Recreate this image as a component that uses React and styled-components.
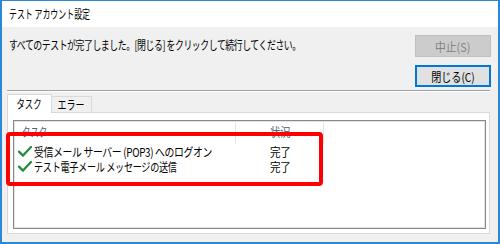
import styled, { createGlobalStyle } from "styled-components";

const FONT = `"Noto Sans CJK JP", "Noto Sans", sans-serif`;

const GlobalStyle = createGlobalStyle`
  html, body {
    margin: 0;
    padding: 0;
    background: #ffffff;
  }
  * {
    box-sizing: border-box;
  }
`;

const tasks = [
  { name: "受信メール サーバー (POP3) へのログオン", status: "完了", sx: 0.82 },
  { name: "テスト電子メール メッセージの送信", status: "完了", sx: 0.76 },
];

function Check() {
  return (
    <CheckIcon viewBox="0 0 14 11" aria-hidden="true">
      <path d="M1 5.6 L5 9.6 L13 1" />
    </CheckIcon>
  );
}

export default function App() {
  return (
    <>
      <GlobalStyle />
      <Window>
        <TitleBar>
          <Narrow $sx={0.66}>テスト アカウント設定</Narrow>
        </TitleBar>
        <Body>
          <TopRow>
            <Message>
              <Narrow $sx={0.74}>
                すべてのテストが完了しました。[閉じる] をクリックして続行してください。
              </Narrow>
            </Message>
            <Button disabled>
              <Narrow $sx={0.9} $center>中止(S)</Narrow>
            </Button>
          </TopRow>
          <ButtonRow>
            <Button $default>
              <Narrow $sx={0.84} $center>閉じる(C)</Narrow>
            </Button>
          </ButtonRow>
          <Separator />
          <TabStrip>
            <Tab $active>
              <Narrow $sx={0.7} $center>タスク</Narrow>
            </Tab>
            <Tab>
              <Narrow $sx={0.75} $center>エラー</Narrow>
            </Tab>
          </TabStrip>
          <TabPanel>
            <ListView>
              <HeaderRow>
                <HeaderCell $w={221} $pad={7}>
                  <Narrow $sx={0.7}>タスク</Narrow>
                </HeaderCell>
                <HeaderCell $w={88} $pad={34}>
                  <Narrow $sx={0.85}>状況</Narrow>
                </HeaderCell>
                <HeaderCell $last />
              </HeaderRow>
              {tasks.map((t) => (
                <Row key={t.name}>
                  <NameCell>
                    <Check />
                    <Narrow $sx={t.sx}>{t.name}</Narrow>
                  </NameCell>
                  <StatusCell>
                    <Narrow $sx={0.88}>{t.status}</Narrow>
                  </StatusCell>
                </Row>
              ))}
            </ListView>
            <Highlight />
          </TabPanel>
        </Body>
      </Window>
    </>
  );
}

const Window = styled.div`
  width: 500px;
  height: 244px;
  display: flex;
  flex-direction: column;
  background: #f0f0f0;
  border: 2px solid #2b88d8;
  border-top-width: 1px;
  font-family: ${FONT};
  font-size: 12px;
  color: #000;
  overflow: hidden;
`;

const Narrow = styled.span`
  display: inline-block;
  white-space: nowrap;
  transform: scaleX(${(p) => p.$sx});
  transform-origin: ${(p) => (p.$center ? "center" : "left")} center;
`;

const TitleBar = styled.div`
  height: 26px;
  flex: none;
  background: #ffffff;
  display: flex;
  align-items: center;
  padding-left: 7px;
  padding-bottom: 1px;
  font-size: 12px;
`;

const Body = styled.div`
  flex: 1;
  display: flex;
  flex-direction: column;
  padding: 8px 7px 0 5px;
`;

const TopRow = styled.div`
  display: flex;
  align-items: center;
  justify-content: space-between;
  height: 22px;
`;

const Message = styled.div`
  padding-left: 2px;
  padding-bottom: 3px;
  font-size: 12px;
  letter-spacing: -0.6px;
  white-space: nowrap;
  width: 0;
  flex: 1;
`;

const ButtonRow = styled.div`
  display: flex;
  justify-content: flex-end;
  margin-top: 8px;
`;

const Button = styled.button`
  width: 76px;
  height: 22px;
  padding: 0;
  display: flex;
  align-items: center;
  justify-content: center;
  font-family: ${FONT};
  font-size: 12px;
  color: #000;
  background: #e1e1e1;
  border: 1px solid #adadad;
  ${(p) => p.$default && `border: 2px solid #0078d7;`}

  &:disabled {
    background: #cccccc;
    border-color: #bfbfbf;
    color: #838383;
  }
`;

const Separator = styled.div`
  margin: 3px 1px 0 0;
  border-top: 1px solid #a0a0a0;
  border-bottom: 1px solid #ffffff;
`;

const Tab = styled.div`
  display: flex;
  align-items: center;
  justify-content: center;
  font-size: 12px;
  border: 1px solid #d9d9d9;
  border-bottom: none;
  background: ${(p) => (p.$active ? "#ffffff" : "#f0f0f0")};
  width: ${(p) => (p.$active ? "45px" : "40px")};
  height: ${(p) => (p.$active ? "19px" : "16px")};
  padding-bottom: ${(p) => (p.$active ? "2px" : "0")};
  ${(p) => !p.$active && `border-left: none;`}
`;

const TabStrip = styled.div`
  display: flex;
  align-items: flex-end;
  margin-top: 2px;
  margin-bottom: -1px;
  height: 19px;
  position: relative;
  z-index: 1;

  ${Tab}:not(:first-child) {
    margin-bottom: 1px;
  }
`;

const TabPanel = styled.div`
  margin-right: 1px;
  height: 122px;
  background: #ffffff;
  border: 1px solid #d9d9d9;
  padding: 7px 3px 4px 5px;
  position: relative;
`;

const ListView = styled.div`
  height: 100%;
  border: 1px solid #828790;
  box-shadow: inset 1px 1px 0 #e3e3e3, inset -1px -1px 0 #e3e3e3;
  background: #ffffff;
  padding: 1px;
`;

const HeaderRow = styled.div`
  display: flex;
  height: 22px;
  color: #4c607a;
  font-size: 12px;
`;

const HeaderCell = styled.div`
  ${(p) => (p.$last ? "flex: 1;" : `width: ${p.$w}px;`)}
  padding-left: ${(p) => p.$pad || 0}px;
  padding-top: 1px;
  border-right: ${(p) => (p.$last ? "none" : "1px solid #e5e5e5")};
  display: flex;
  align-items: flex-start;
`;

const Row = styled.div`
  display: flex;
  align-items: center;
  height: 15px;
  line-height: 15px;
  font-size: 12px;
  letter-spacing: -0.4px;
`;

const NameCell = styled.div`
  width: 221px;
  display: flex;
  align-items: center;
  padding-left: 3px;
  gap: 2px;
`;

const StatusCell = styled.div`
  padding-left: 34px;
`;

const CheckIcon = styled.svg`
  width: 14px;
  height: 11px;
  flex: none;
  path {
    fill: none;
    stroke: #1f8c3b;
    stroke-width: 2.2;
    stroke-linecap: round;
    stroke-linejoin: round;
  }
`;

const Highlight = styled.div`
  position: absolute;
  left: -2px;
  top: 19px;
  width: 317px;
  height: 54px;
  border: 4px solid #ff0000;
  border-radius: 4px;
  pointer-events: none;
`;
